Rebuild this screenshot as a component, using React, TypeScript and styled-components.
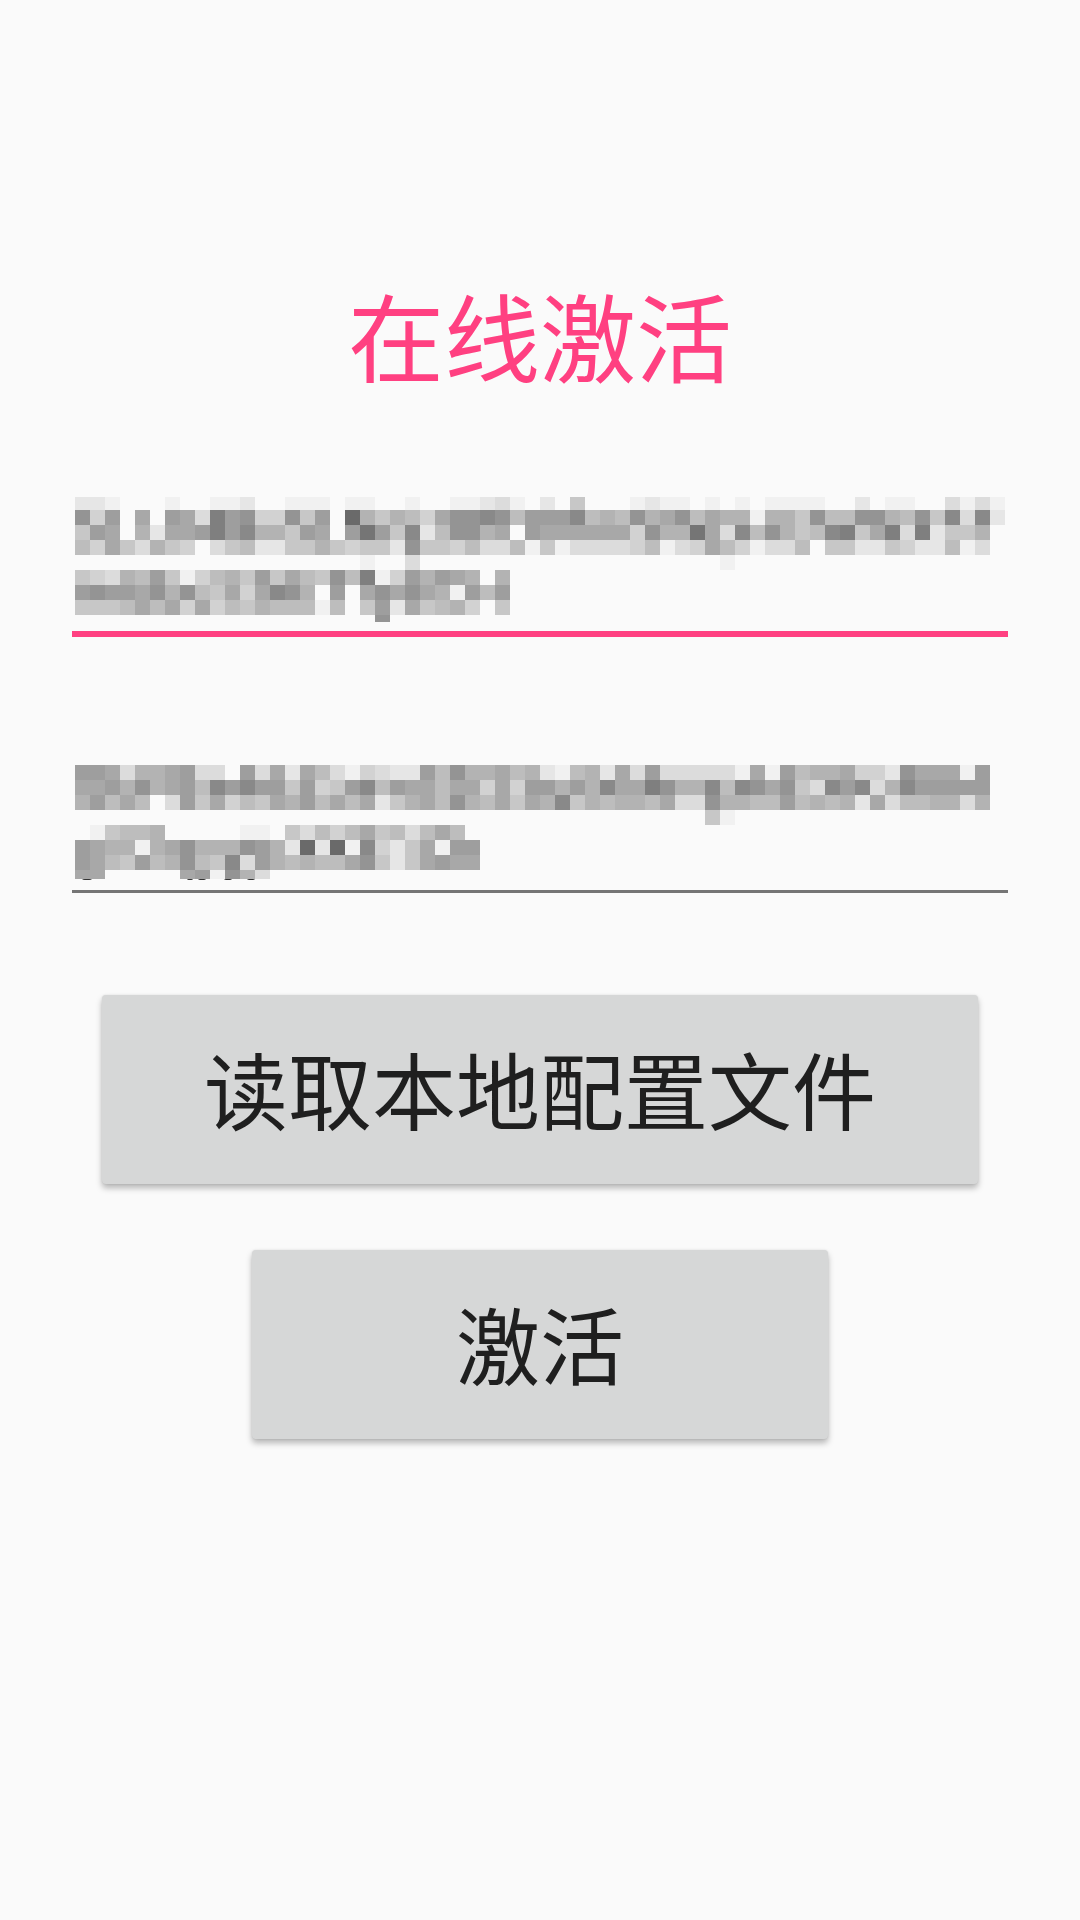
import * as React from "react"
import styled, { createGlobalStyle } from "styled-components"

const GlobalStyle = createGlobalStyle`
  html, body {
    margin: 0;
    padding: 0;
    background: #fafafa;
  }
`

const Page = styled.div`
  width: 1080px;
  height: 1920px;
  display: flex;
  flex-direction: column;
  align-items: center;
  background: #fafafa;
  font-family: "Noto Sans CJK SC", "Noto Sans", sans-serif;
  overflow: hidden;
`

const Title = styled.h1`
  margin: 276px 0 0;
  font-size: 96px;
  line-height: 116px;
  font-weight: 400;
  color: #ff4081;
`

const Field = styled.div<{ $active?: boolean }>`
  width: 936px;
  box-sizing: border-box;
  margin-top: ${(p) => (p.$active ? "105px" : "128px")};
  padding: 0 0 ${(p) => (p.$active ? "9px" : "10px")} 3px;
  border-bottom: ${(p) => (p.$active ? "6px solid #ff4081" : "3px solid #757575")};
`

const Blur = styled.svg`
  display: block;
`

const ActionButton = styled.button<{ $width: number; $top: number }>`
  display: block;
  width: ${(p) => p.$width}px;
  height: 189px;
  margin-top: ${(p) => p.$top}px;
  padding: 0 0 3px;
  border: none;
  border-radius: 4px;
  background: #d6d7d7;
  color: #1f1f1f;
  font-family: inherit;
  font-size: 84px;
  line-height: 1;
  box-shadow: 0 4px 6px rgba(0, 0, 0, 0.28), 0 0 2px rgba(0, 0, 0, 0.1);
`

// blurred text in the inputs, one hex digit per 15px cell (f = background)
type MosaicRow = { h: number; cells: string }

const keyRows: MosaicRow[] = [
  { h: 13, cells: "ddefffeffeedffeeefeeff" + "effeedcefdfafffedeefef" + "efeeeeffdfeeffcece" },
  { h: 15, cells: "5b6f7f67c365bb5a6f18a8" + "9b755459666498958759 78" + "8e88a599558 95a4c4d" },
  { h: 15, cells: "a67f8d77636488a67f626a" + "4d95587f6777777b58827c" + "4958a9 43a73c3daa8f" },
  { h: 15, cells: "9b7ac8abfca9ddaa8abaad" + "5aab9cc9eaeccccb9ecb79" + "becc9faaddabdd9ecf" },
  { h: 15, cells: "fffffffffffffffffffeff" + "cffffffffffffffffffffe" },
  { h: 15, cells: "abc896aeb98a6a79a593eb" + "68678f8" },
  { h: 15, cells: "6566758 59a7b7458f6f757" + "578e696" },
  { h: 15, cells: "aaa9797b7b9a8999e9fa6d" + "7a98bfa" },
  { h: 7, cells: "ffffffffffffffffffff5f" },
].map((r) => ({ h: r.h, cells: r.cells.replace(/ /g, "") }))

const serialRows: MosaicRow[] = [
  { h: 15, cells: "667c8876ccf6c7d79cebcd" + "d69588798de98d7c6ccccc" + "e7e69887bbd5777e6" },
  { h: 15, cells: "77685876946466a6ba6496" + "77977b7b668684773588 49" + "4575ac464c8466666" },
  { h: 15, cells: "86979fc6a7b9a7869797da" + "87958 97a784a898897cc58" + "89969898d7c9988c8" },
  { h: 15, cells: "ffffffffffffffffffffff" + "ffffffffffffffffffffae" },
  { h: 15, cells: "fea998fffffeefac9b97a9" + "c979" },
  { h: 15, cells: "6788e87588856 8d1d1e4bd" + "a7e66" },
  { h: 15, cells: "679a69859a4c689899 75ad" + "a7677" },
  { h: 9, cells: "77fffff76e58c" },
].map((r) => ({ h: r.h, cells: r.cells.replace(/ /g, "") }))

// bits of the text that stick out under the blur
const serialDots = [
  { x: 12, w: 5 },
  { x: 115, w: 3 },
  { x: 127, w: 4 },
  { x: 153, w: 4 },
  { x: 176, w: 4 },
]

const cellColor = (digit: string) => {
  const v = Math.round(96 + parseInt(digit, 16) * 10.33)
  return `rgb(${v},${v},${v})`
}

const Mosaic: React.FC<{ rows: MosaicRow[]; dots?: typeof serialDots }> = ({ rows, dots }) => {
  let y = 0
  const height = rows.reduce((sum, r) => sum + r.h, 0) + (dots ? 1 : 0)
  return (
    <Blur width={930} height={height} shapeRendering="crispEdges">
      {dots?.map((d) => (
        <ellipse key={d.x} cx={d.x} cy={height - 1.5} rx={d.w} ry={1.5} fill="#333" shapeRendering="auto" />
      ))}
      {rows.map((row, i) => {
        const top = y
        y += row.h
        return row.cells.split("").map((c, j) =>
          c === "f" ? null : (
            <rect key={`${i}-${j}`} x={j * 15} y={top} width={15} height={row.h} fill={cellColor(c)} />
          )
        )
      })}
    </Blur>
  )
}

const App: React.FC = () => {
  return (
    <Page>
      <GlobalStyle />
      <Title>在线激活</Title>
      <Field $active>
        <Mosaic rows={keyRows} />
      </Field>
      <Field>
        <Mosaic rows={serialRows} dots={serialDots} />
      </Field>
      <ActionButton $width={876} $top={102}>读取本地配置文件</ActionButton>
      <ActionButton $width={576} $top={66}>激活</ActionButton>
    </Page>
  )
}

export default App
